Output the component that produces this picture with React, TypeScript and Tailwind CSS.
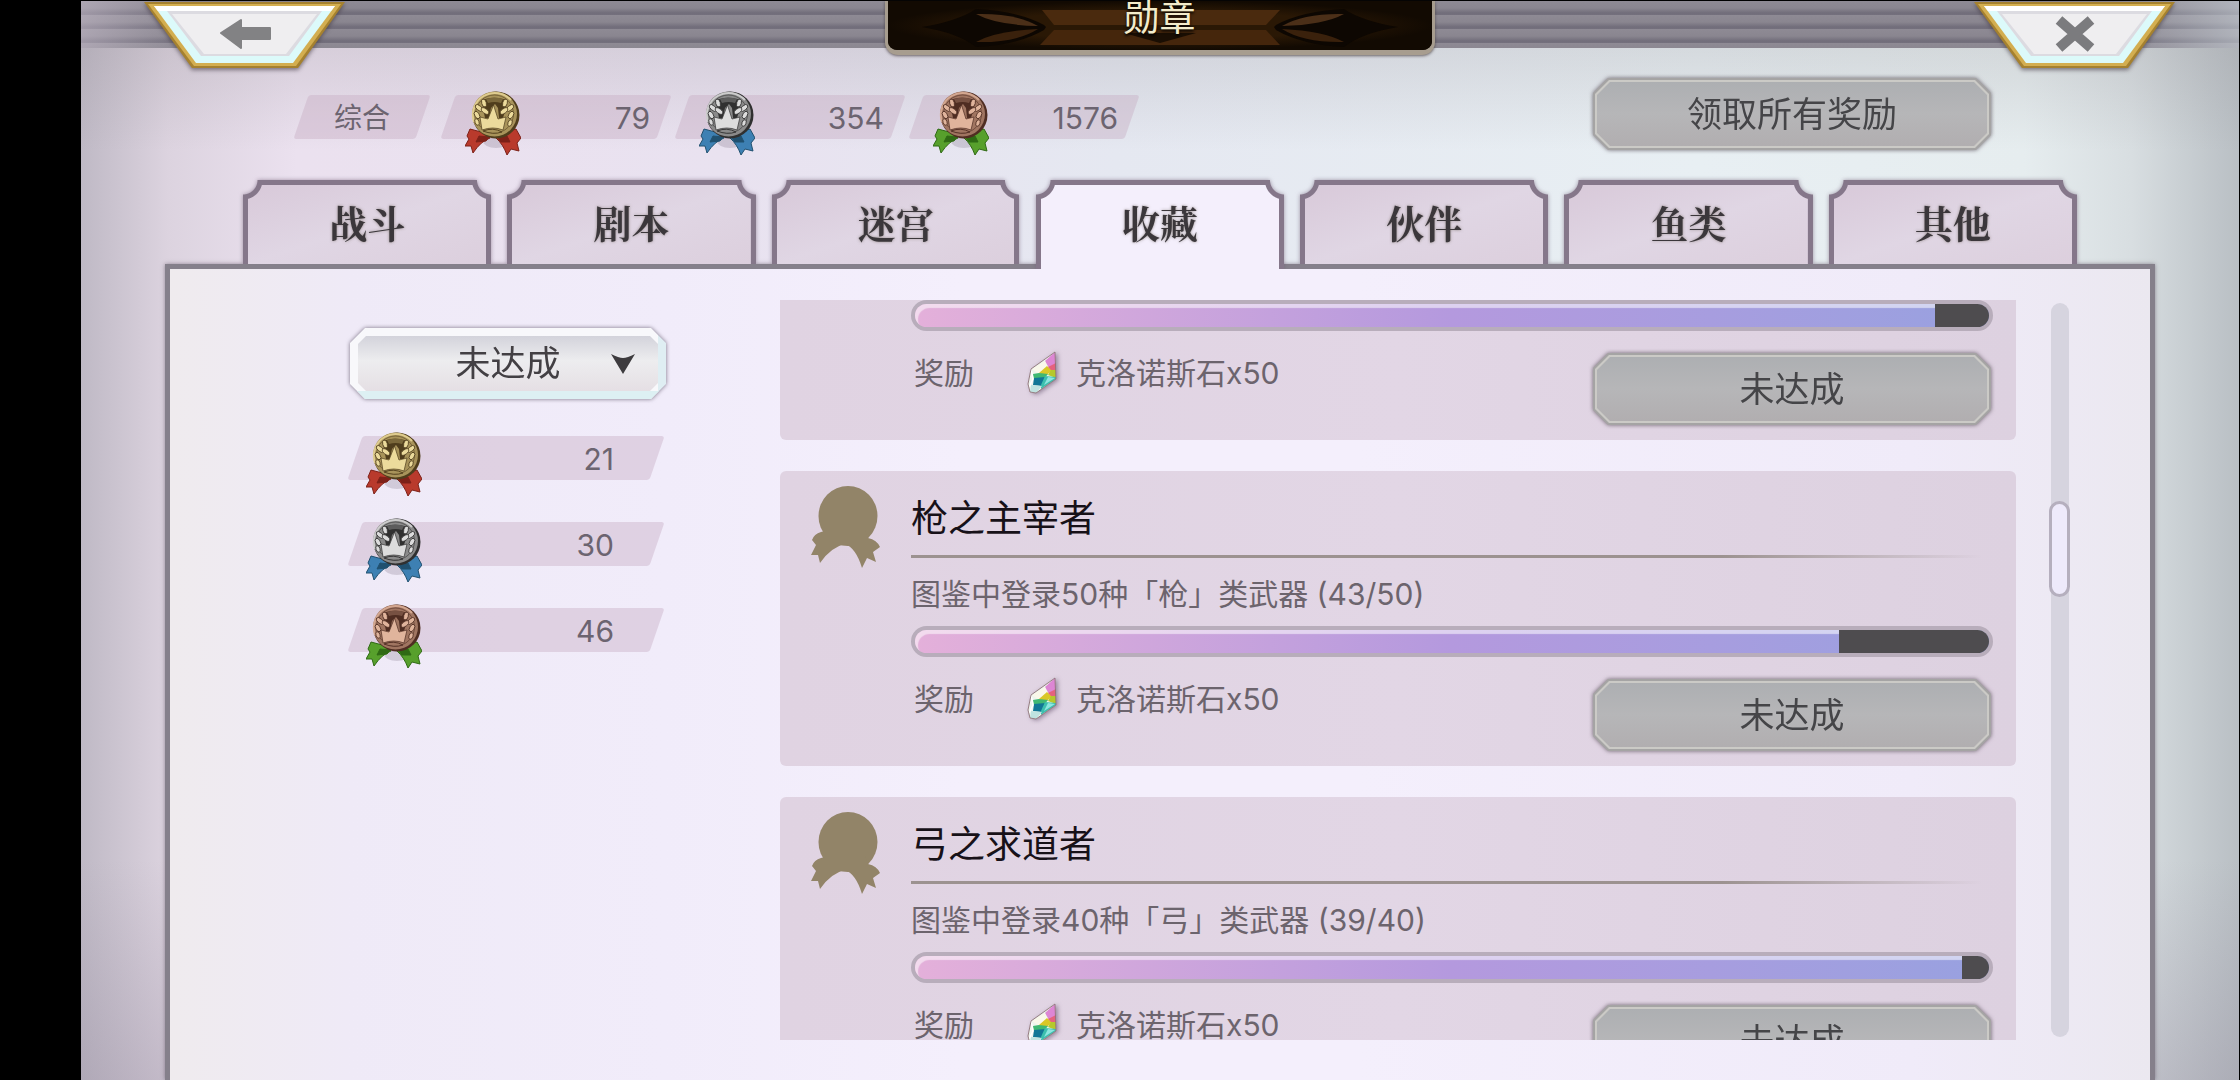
import React, { useState } from 'react';
import clsx from 'clsx';

type MedalKind = 'gold' | 'silver' | 'bronze';

interface Achievement {
  id: number;
  title?: string;
  description?: string;
  progress: number;
  reward: string;
}

const TABS = ['战斗', '剧本', '迷宫', '收藏', '伙伴', '鱼类', '其他'];

const TOTALS: { kind: MedalKind; count: number }[] = [
  { kind: 'gold', count: 79 },
  { kind: 'silver', count: 354 },
  { kind: 'bronze', count: 1576 },
];

const REMAINING: { kind: MedalKind; count: number }[] = [
  { kind: 'gold', count: 21 },
  { kind: 'silver', count: 30 },
  { kind: 'bronze', count: 46 },
];

const ACHIEVEMENTS: Achievement[] = [
  { id: 1, progress: 95, reward: '克洛诺斯石x50' },
  {
    id: 2,
    title: '枪之主宰者',
    description: '图鉴中登录50种「枪」类武器 (43/50)',
    progress: 86,
    reward: '克洛诺斯石x50',
  },
  {
    id: 3,
    title: '弓之求道者',
    description: '图鉴中登录40种「弓」类武器 (39/40)',
    progress: 97.5,
    reward: '克洛诺斯石x50',
  },
];

const MEDAL_COLORS = {
  gold: { light: '#ecdb9c', mid: '#a8935a', dark: '#4f3d1c', ribbon: '#b93a2c', fold: '#7d2118' },
  silver: { light: '#dcdcdc', mid: '#8a8a8a', dark: '#303030', ribbon: '#3d80b3', fold: '#20506f' },
  bronze: { light: '#e0b49c', mid: '#a07561', dark: '#4f2d22', ribbon: '#57a02c', fold: '#2f6a14' },
};

const Medal: React.FC<{ kind: MedalKind; className?: string }> = ({ kind, className }) => {
  const c = MEDAL_COLORS[kind];
  return (
    <svg viewBox="0 0 56 66" className={clsx('h-[66px] w-14 shrink-0', className)} aria-hidden="true">
      <ellipse cx="31" cy="50" rx="13" ry="7" fill="#6b5a74" opacity="0.22" />
      {/* Ribbon */}
      <g stroke={c.fold} strokeWidth="1" strokeLinejoin="round">
        <path d="M5 38 L20 42 L25 47 Q16 50 8 62 L6 55 L0 55 L4 48 L2 45 Z" fill={c.ribbon} />
        <path d="M51 38 L37 42 L31 47 Q38 53 42 64 L46 58 L54 60 L52 52 L56 47 Z" fill={c.ribbon} />
        <path d="M14 45 L24 46 L21 50 L11 51 Z" fill={c.fold} />
        <path d="M42 45 L32 46 L36 51 L45 51 Z" fill={c.fold} />
      </g>
      {/* Disc */}
      <circle cx="31" cy="24" r="23.5" fill={c.dark} />
      <circle cx="29.500" cy="23" r="22.500" fill={c.mid} />
      <path d="M9 31 A22 22 0 0 1 46 9" fill="none" stroke={c.light} strokeWidth="2" opacity="0.8" />
      <circle cx="29.500" cy="23" r="19" fill="none" stroke={c.dark} strokeWidth="0.8" opacity="0.7" />
      {/* Horseshoe */}
      <path
        d="M17 9 Q29 4 42 9 L41 17 L38 27 L34 27 L33 17 L30 13 L26 17 L24 27 L20 27 L18 17 Z"
        fill={c.dark}
      />
      <path d="M21 8 Q29.500 5 38 8 L36 12 Q29.500 10 23 12 Z" fill={c.mid} opacity="0.5" />
      {/* Laurel leaves */}
      <g fill={c.light} stroke={c.dark} strokeWidth="0.8">
        <ellipse cx="19" cy="12" rx="2.300" ry="4" transform="rotate(-15 19 12)" />
        <ellipse cx="14" cy="17" rx="2.300" ry="4.500" transform="rotate(-50 14 17)" />
        <ellipse cx="20" cy="20" rx="2.300" ry="4.500" transform="rotate(-55 20 20)" />
        <ellipse cx="12" cy="24" rx="2.300" ry="4" transform="rotate(-30 12 24)" />
        <ellipse cx="12" cy="31" rx="2" ry="3.500" transform="rotate(-20 12 31)" />
        <ellipse cx="40" cy="12" rx="2.300" ry="4" transform="rotate(15 40 12)" />
        <ellipse cx="45" cy="17" rx="2.300" ry="4.500" transform="rotate(50 45 17)" />
        <ellipse cx="39" cy="20" rx="2.300" ry="4.500" transform="rotate(55 39 20)" />
        <ellipse cx="46" cy="24" rx="2.300" ry="4" transform="rotate(30 46 24)" />
        <ellipse cx="45" cy="32" rx="2" ry="3.500" transform="rotate(20 45 32)" />
      </g>
      {/* Crown */}
      <path
        d="M15 26 L23 28 L28.500 14 L33 28 L41 26 L38 39 Q28 35 17 39 Z"
        fill={c.light}
        stroke={c.dark}
        strokeWidth="0.700"
      />
      <path d="M18 40 Q28 36 37 41 Q28 44 18 40 Z" fill={c.mid} stroke={c.dark} strokeWidth="0.900" />
    </svg>
  );
};

const LockedMedal = () => (
  <svg viewBox="0 0 69 82" className="h-[82px] w-[69px] shrink-0" aria-hidden="true">
    <g fill="#928468">
      <ellipse cx="37" cy="30" rx="29.500" ry="30" />
      <path d="M10 46 Q3 48 1 54 L5 59 L0 69 L7 69 L9 77 Q20 61 34 58 Q45 62 51 82 L56 72 L65 76 L62 66 L69 61 Q66 54 57 52 L54 44 L18 44 Z" />
    </g>
  </svg>
);

const Crystal = () => (
  <svg viewBox="0 0 28 42" className="h-[42px] w-7 shrink-0 overflow-visible drop-shadow-[2px_1px_2px_rgba(80,60,90,0.5)]" aria-hidden="true">
    <path d="M27 0 L28 27 L8 41 L2 40 L0 32 L3 17 Z" fill="#eef5ee" />
    <path d="M27 0 L28 13 L21 16 L17 9 Z" fill="#dd86d4" />
    <path d="M17 9 L20 16 L11 22 L4 17 Z" fill="#faf8ea" />
    <path d="M28 11 L28 19 L22 18 L20 15 Z" fill="#e4627e" />
    <path d="M19 14 L24 19 L17 24 L11 21 Z" fill="#d9c727" />
    <path d="M23 18 L28 18 L28 26 L20 23 Z" fill="#b5c82c" />
    <path d="M11 21 L20 22 L16 27 L6 28 L5 22 Z" fill="#3fb873" />
    <path d="M6 26 L17 25 L14 34 L5 33 Z" fill="#117796" />
    <path d="M17 24 L28 25 L28 27 L13 37 L13 33 Z" fill="#3cbfae" />
    <path d="M20 25 L27 26 L16 33 Z" fill="#8de6e0" />
    <path d="M3 33 L14 34 L8 41 L2 40 Z" fill="#bfe3e0" />
    <path d="M3 17 L5 27 L1 35" fill="none" stroke="#ffffff" strokeWidth="1.500" />
    <path d="M27 0 L28 27 L8 41 L2 40 L0 32 L3 17 Z" fill="none" stroke="#8f7478" strokeWidth="0.900" strokeLinejoin="round" />
  </svg>
);

interface StatChipProps {
  kind: MedalKind;
  count: number;
  className?: string;
}

const StatChip: React.FC<StatChipProps> = ({ kind, count, className }) => (
  <div className={clsx('relative flex h-11 items-center justify-between', className)}>
    <span className="absolute inset-x-[7px] inset-y-0 -skew-x-[19deg] rounded-[3px] bg-[#c6a9c0]/40" />
    <Medal kind={kind} className="relative -mt-1 self-start" />
    <span className="relative pt-0.5 text-[30px] leading-none text-[#6c6470]">{count}</span>
  </div>
);

const GreyButton: React.FC<{ children: React.ReactNode }> = ({ children }) => (
  <button
    type="button"
    className="h-[76px] w-[402px] shrink-0 p-0.5 text-[35px] leading-none text-[#454548] drop-shadow-[0_0_2px_rgba(80,70,80,0.8)]"
  >
    <span className="block h-full bg-[#a5a4a4] p-0.5 [clip-path:polygon(15px_0,calc(100%-15px)_0,100%_15px,100%_calc(100%-15px),calc(100%-15px)_100%,15px_100%,0_calc(100%-15px),0_15px)]">
      <span className="block h-full bg-[#cbcac6] p-0.5 [clip-path:polygon(14px_0,calc(100%-14px)_0,100%_14px,100%_calc(100%-14px),calc(100%-14px)_100%,14px_100%,0_calc(100%-14px),0_14px)]">
        <span className="flex h-full items-center justify-center bg-linear-to-b from-[#adafb2] via-[#b6b6b8] to-[#b1aeb0] [clip-path:polygon(13px_0,calc(100%-13px)_0,100%_13px,100%_calc(100%-13px),calc(100%-13px)_100%,13px_100%,0_calc(100%-13px),0_13px)]">
          {children}
        </span>
      </span>
    </span>
  </button>
);

const CornerButton: React.FC<{ label: string; children: React.ReactNode }> = ({ label, children }) => (
  <button type="button" aria-label={label} className="mt-px h-[68px] w-[201px] shrink-0">
    <svg viewBox="0 0 201 68" className="h-full w-full overflow-visible drop-shadow-[0_2px_2px_rgba(60,50,60,0.6)]">
      <path d="M0 0 H201 L154 66 H48 Z" fill="#a5812f" />
      <path d="M4 2 H197 L152 64 H50 Z" fill="#d3ae50" />
      <path d="M10 4 H191 L149 61 H52 Z" fill="#dcfafa" />
      <path d="M10 4 H191 L187 9 H14 Z" fill="#ffffff" />
      <path d="M23 9 H178 L145 54 H57 Z" fill="#dcdbe1" />
      <path d="M28 12 H173 L142 52 H60 Z" fill="#efeef0" />
      {children}
    </svg>
  </button>
);

const TitlePlate = () => (
  <div className="relative flex h-[54px] w-[550px] shrink-0 justify-center rounded-b-[13px] border-x-[3px] border-b-[5px] border-[#a79d8f] bg-[#120a02] shadow-[0_1px_3px_rgba(60,50,50,0.7)]">
    <svg viewBox="0 0 544 49" className="absolute inset-0 h-full w-full" aria-hidden="true">
      <defs>
        <radialGradient id="plate-glow" cx="0.5" cy="0.5" r="0.5">
          <stop offset="0.6" stopColor="#2a1805" />
          <stop offset="1" stopColor="#120a02" />
        </radialGradient>
      </defs>
      <rect width="544" height="49" rx="9" fill="url(#plate-glow)" />
      <path d="M154 9 H392 L378 24 H166 Z" fill="#4a2a0e" />
      <path d="M166 29 H378 L392 44 H152 Z" fill="#45260c" />
      <path d="M34 26 Q70 20 88 8 Q130 10 156 24 L158 26 L156 29 Q130 44 88 46 Q70 32 34 26 Z" fill="#0d0702" />
      <path d="M88 13 Q128 12 150 25 Q108 24 88 13 Z" fill="#4b2f18" />
      <path d="M88 41 Q128 42 150 28 Q108 30 88 41 Z" fill="#3a210c" />
      <path d="M510 26 Q474 20 456 8 Q414 10 388 24 L386 26 L388 29 Q414 44 456 46 Q474 32 510 26 Z" fill="#0d0702" />
      <path d="M456 13 Q416 12 394 25 Q436 24 456 13 Z" fill="#4b2f18" />
      <path d="M456 41 Q416 42 394 28 Q436 30 456 41 Z" fill="#3a210c" />
      <path d="M236 32 L272 42 L308 32 Z" fill="#1a0e03" />
    </svg>
    <h1 className="relative text-4xl leading-[34px] text-[#f3eccb] [text-shadow:0_2px_3px_#000]">勋章</h1>
  </div>
);

interface TabProps {
  label: string;
  active: boolean;
  onSelect: () => void;
}

const Tab: React.FC<TabProps> = ({ label, active, onSelect }) => (
  <button
    type="button"
    role="tab"
    aria-selected={active}
    onClick={onSelect}
    className={clsx(
      'relative [clip-path:inset(-6px_-6px_0)]',
      active ? 'z-10 -mb-[5px] h-[89px]' : 'h-[84px]'
    )}
  >
    <span className="block h-full drop-shadow-[0_0_2px_rgba(110,90,115,0.6)]">
      <span className="block h-full bg-[#85778a] px-[5px] pt-[5px] [mask:radial-gradient(circle_at_0_0,#0000_14px,#000_15px)_left/51%_100%_no-repeat,radial-gradient(circle_at_100%_0,#0000_14px,#000_15px)_right/51%_100%_no-repeat]">
        <span
          className={clsx(
            'block h-full [mask:radial-gradient(circle_at_-5px_-5px,#0000_19px,#000_20px)_left/51%_100%_no-repeat,radial-gradient(circle_at_calc(100%+5px)_-5px,#0000_19px,#000_20px)_right/51%_100%_no-repeat]',
            active ? 'bg-[#f4effc]' : 'bg-linear-to-br from-[#d8c9d9] via-[#e0d6e4] to-[#dccfdd]'
          )}
        >
          <span className="block pt-3 font-['Noto_Serif_CJK_SC','Noto_Sans_CJK_SC',serif] text-[38px] leading-[50px] font-bold text-[#3b373b] [text-shadow:0_0_3px_rgba(110,100,90,0.7)]">
            {label}
          </span>
        </span>
      </span>
    </span>
  </button>
);

const ProgressBar: React.FC<{ value: number }> = ({ value }) => (
  <div
    role="progressbar"
    aria-valuenow={value}
    aria-valuemin={0}
    aria-valuemax={100}
    className="h-[31px] rounded-full border-4 border-[#b8adbb] bg-linear-to-r from-[#e4b0da] via-[#b499de] to-[#98a1e0]"
  >
    <div className="flex h-full justify-end overflow-hidden rounded-full shadow-[inset_3px_4px_1px_rgba(255,255,255,0.55)]">
      <div className="h-full bg-[#4e4c4f]" style={{ width: `${100 - value}%` }} />
    </div>
  </div>
);

const AchievementCard: React.FC<{ item: Achievement }> = ({ item }) => (
  <li
    className={clsx(
      'flex shrink-0 gap-[31px] bg-linear-to-r from-[#e0d3e2] via-[#e2d6e5] to-[#ddd1e0] pr-[23px] pb-[13px] pl-[31px]',
      item.title ? 'rounded-md pt-[13px]' : 'rounded-b-md'
    )}
  >
    <div className="w-[69px] shrink-0 pt-0.5">{item.title && <LockedMedal />}</div>
    <div className="min-w-0 flex-1">
      {item.title && (
        <>
          <h2 className="text-[37px] leading-[70px] text-[#171118]">{item.title}</h2>
          <div className="mt-px h-[3px] bg-linear-to-r from-[#9c9290] from-75% to-transparent to-99%" />
          <p className="mt-4 text-[30px] leading-10 text-[#6c646d]">{item.description}</p>
        </>
      )}
      <div className={clsx(item.title && 'mt-3')}>
        <ProgressBar value={item.progress} />
      </div>
      <div className="mt-5 flex items-start justify-between">
        <div className="flex h-11 items-center pl-[3px] text-[30px] leading-none text-[#6c646d]">
          <span>奖励</span>
          <span className="mr-5 ml-[54px]">
            <Crystal />
          </span>
          <span>{item.reward}</span>
        </div>
        <GreyButton>未达成</GreyButton>
      </div>
    </div>
  </li>
);

const StatusFilter = () => (
  <div className="relative h-[75px] p-0.5 drop-shadow-[0_0_2px_rgba(90,80,100,0.8)]">
    <div className="h-full bg-[linear-gradient(to_top,#ddf0f3_8px,transparent_8px),linear-gradient(to_left,#dfeef3_8px,#f8f8fb_8px)] p-2 [clip-path:polygon(15px_0,calc(100%-15px)_0,100%_15px,100%_calc(100%-15px),calc(100%-15px)_100%,15px_100%,0_calc(100%-15px),0_15px)]">
      <select
        aria-label="达成状态"
        defaultValue="pending"
        className="h-full w-full appearance-none bg-linear-to-b from-[#d3d3db] via-[#ededef] via-45% to-[#e5dfe4] text-[35px] leading-none text-[#434044] [clip-path:polygon(8px_0,calc(100%-8px)_0,100%_8px,100%_calc(100%-8px),calc(100%-8px)_100%,8px_100%,0_calc(100%-8px),0_8px)] [text-align-last:center]"
      >
        <option value="pending">未达成</option>
      </select>
    </div>
    <svg viewBox="0 0 24 20" className="pointer-events-none absolute top-7 right-[33px] h-5 w-6" aria-hidden="true">
      <path d="M0 0 Q8 4 12 4 Q16 4 24 0 L12 20 Z" fill="#3d3b3e" />
    </svg>
  </div>
);

const App: React.FC = () => {
  const [activeTab, setActiveTab] = useState('收藏');

  return (
    <div className="h-screen overflow-hidden bg-black pt-px pr-px pl-[81px] font-['Inter','Noto_Sans_CJK_SC',sans-serif]">
      <div className="flex h-full flex-col bg-[linear-gradient(0deg,rgba(140,130,150,0.3)_0px,transparent_220px),linear-gradient(180deg,rgba(130,125,130,0.2)_40px,transparent_150px),linear-gradient(90deg,#bfb9c5_0%,#dcd3df_4%,#ebe1ef_10%,#e9e2f0_30%,#e5e8f1_48%,#e8eff3_75%,#e6edef_90%,#d8dee1_95%,#b9bfc4_100%)]">
        {/* Header */}
        <header className="flex h-[47px] shrink-0 items-start justify-between bg-[linear-gradient(90deg,rgba(205,195,210,0.5)_0%,transparent_5%,transparent_94%,rgba(200,208,215,0.6)_100%),repeating-linear-gradient(180deg,#8e8a94_0px,#8a8690_7px,#716d7a_12px,#74707d_14px)] pr-[64px] pl-[63px]">
          <CornerButton label="返回">
            <path d="M77 31 L97 18 V26 H126 V37 H97 V46 Z" fill="#828284" stroke="#828284" strokeWidth="2" strokeLinejoin="round" />
          </CornerButton>
          <TitlePlate />
          <CornerButton label="关闭">
            <path d="M85 18 L117 46 M117 18 L85 46" fill="none" stroke="#7b7b7e" strokeWidth="10" />
          </CornerButton>
        </header>

        {/* Totals */}
        <section className="flex shrink-0 items-center justify-between pt-7 pr-[246px] pl-[213px]">
          <div className="flex items-center gap-1 pt-1.5">
            <div className="relative mr-[7px] flex h-11 w-[136px] items-center justify-center">
              <span className="absolute inset-x-[7px] inset-y-0 -skew-x-[19deg] rounded-[3px] bg-[#c6a9c0]/40" />
              <span className="relative pt-0.5 text-[28px] leading-none text-[#6c6470]">综合</span>
            </div>
            {TOTALS.map((total) => (
              <StatChip key={total.kind} {...total} className="w-[230px] pr-[21px] pl-6" />
            ))}
          </div>
          <GreyButton>领取所有奖励</GreyButton>
        </section>

        {/* Tabs and panel */}
        <div className="mx-[84px] mt-7 flex min-h-0 flex-1 flex-col">
          <div role="tablist" className="grid shrink-0 grid-cols-7 items-start gap-4 px-[78px]">
            {TABS.map((tab) => (
              <Tab key={tab} label={tab} active={tab === activeTab} onSelect={() => setActiveTab(tab)} />
            ))}
          </div>

          <main className="flex min-h-0 flex-1 border-[5px] border-b-0 border-[#85808b] bg-[linear-gradient(90deg,#efebee_0%,#efeaf7_9%,#f1ecfa_25%,#f4effc_40%,#f4effc_60%,#f0ebf9_88%,#ebe8f0_100%)] pt-[31px] pr-20 pb-10 pl-[178px] shadow-[0_0_4px_rgba(90,80,95,0.6)]">
            <aside className="w-80 shrink-0 pt-[26px]">
              <StatusFilter />
              <div className="mt-[35px] flex flex-col gap-[42px]">
                {REMAINING.map((stat) => (
                  <StatChip key={stat.kind} {...stat} className="w-[316px] pr-[50px] pl-[18px]" />
                ))}
              </div>
            </aside>

            <ul className="ml-[112px] flex min-w-0 flex-1 flex-col gap-[31px] overflow-y-auto [scrollbar-width:none]">
              {ACHIEVEMENTS.map((item) => (
                <AchievementCard key={item.id} item={item} />
              ))}
            </ul>

            {/* Scroll indicator */}
            <div className="ml-[33px] flex w-[21px] shrink-0 justify-center py-[3px]">
              <div className="flex w-[18px] flex-col items-center rounded-full bg-[#d6d4df]">
                <div className="basis-[27%]" />
                <div className="w-[21px] basis-[13%] rounded-full border-[3px] border-[#b5afbe] bg-[#eeeafb]" />
              </div>
            </div>
          </main>
        </div>
      </div>
    </div>
  );
};

export default App;
